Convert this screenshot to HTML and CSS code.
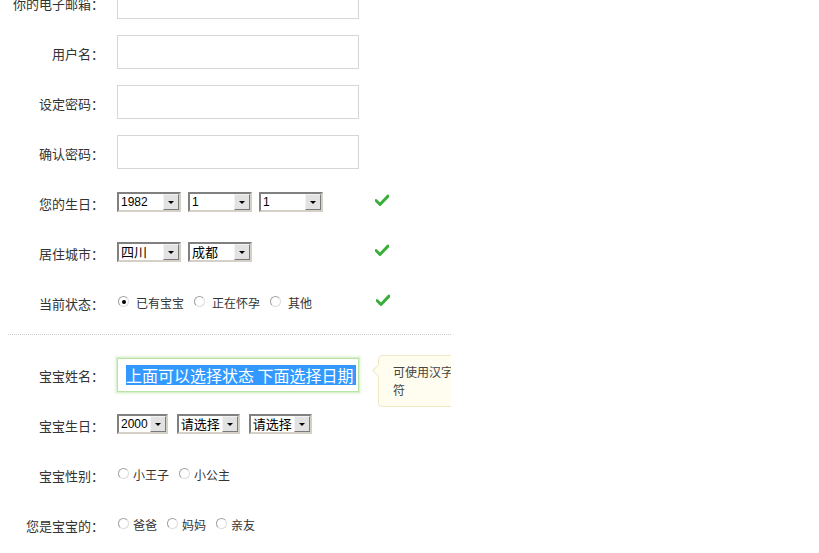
FILE: index.html
```html
<!DOCTYPE html>
<html lang="zh-CN">
<head>
<meta charset="utf-8">
<title>注册</title>
<link rel="stylesheet" href="styles.css">
</head>
<body>
<div class="page">
  <div class="row">
    <div class="label">你的电子邮箱：</div>
    <div class="field"><div class="text-input"></div></div>
  </div>
  <div class="row">
    <div class="label">用户名：</div>
    <div class="field"><div class="text-input"></div></div>
  </div>
  <div class="row">
    <div class="label">设定密码：</div>
    <div class="field"><div class="text-input"></div></div>
  </div>
  <div class="row">
    <div class="label">确认密码：</div>
    <div class="field"><div class="text-input"></div></div>
  </div>
  <div class="row">
    <div class="label">您的生日：</div>
    <div class="field wide">
      <div class="select w64"><span class="sel-text">1982</span><span class="sel-btn"></span></div>
      <div class="select w64"><span class="sel-text">1</span><span class="sel-btn"></span></div>
      <div class="select w64"><span class="sel-text">1</span><span class="sel-btn"></span></div>
    </div>
    <svg class="check" width="14" height="12" viewBox="0 0 14 12"><path d="M1 6.5 L5 10.5 L13 2" fill="none" stroke="#3aae3a" stroke-width="3" stroke-linecap="round" stroke-linejoin="round"/></svg>
  </div>
  <div class="row">
    <div class="label">居住城市：</div>
    <div class="field wide">
      <div class="select w64"><span class="sel-text cjk">四川</span><span class="sel-btn"></span></div>
      <div class="select w64"><span class="sel-text cjk">成都</span><span class="sel-btn"></span></div>
    </div>
    <svg class="check" width="14" height="12" viewBox="0 0 14 12"><path d="M1 6.5 L5 10.5 L13 2" fill="none" stroke="#3aae3a" stroke-width="3" stroke-linecap="round" stroke-linejoin="round"/></svg>
  </div>
  <div class="row">
    <div class="label">当前状态：</div>
    <div class="field wide radios status">
      <span class="radio checked"></span><span class="rtext">已有宝宝</span>
      <span class="radio"></span><span class="rtext">正在怀孕</span>
      <span class="radio"></span><span class="rtext">其他</span>
    </div>
    <svg class="check" width="14" height="12" viewBox="0 0 14 12"><path d="M1 6.5 L5 10.5 L13 2" fill="none" stroke="#3aae3a" stroke-width="3" stroke-linecap="round" stroke-linejoin="round"/></svg>
  </div>

  <div class="divider"></div>

  <div class="row">
    <div class="label">宝宝姓名：</div>
    <div class="field">
      <div class="text-input focus"><span class="selected">上面可以选择状态&nbsp;下面选择日期</span></div>
    </div>
    <div class="tip">可使用汉字、字母、数字，最多8个字<br>符</div>
  </div>
  <div class="row">
    <div class="label">宝宝生日：</div>
    <div class="field sel-gap">
      <div class="select"><span class="sel-text tight">2000</span><span class="sel-btn"></span></div>
      <div class="select"><span class="sel-text cjk tight">请选择</span><span class="sel-btn"></span></div>
      <div class="select"><span class="sel-text cjk tight">请选择</span><span class="sel-btn"></span></div>
    </div>
  </div>
  <div class="row">
    <div class="label">宝宝性别：</div>
    <div class="field radios small">
      <span class="radio"></span><span class="rtext">小王子</span>
      <span class="radio"></span><span class="rtext">小公主</span>
    </div>
  </div>
  <div class="row">
    <div class="label">您是宝宝的：</div>
    <div class="field radios small">
      <span class="radio"></span><span class="rtext">爸爸</span>
      <span class="radio"></span><span class="rtext">妈妈</span>
      <span class="radio"></span><span class="rtext">亲友</span>
    </div>
  </div>
</div>
</body>
</html>
```

FILE: styles.css
```css
html, body {
  margin: 0;
  padding: 0;
  background: #ffffff;
}

body {
  font-family: "Noto Sans CJK SC", "Liberation Sans", sans-serif;
  color: #333333;
  font-size: 13px;
}

.page {
  width: 443px;
  margin-left: 8px;
  margin-top: -23px;
  overflow: hidden;
}

.row {
  display: flex;
  align-items: center;
  height: 50px;
}

.label {
  width: 96px;
  flex-shrink: 0;
  text-align: right;
  font-size: 13px;
  line-height: 16px;
  white-space: nowrap;
  padding-top: 3px;
}

.field {
  margin-left: 13px;
  display: flex;
  align-items: center;
  flex-shrink: 0;
}

.field.wide {
  width: 258px;
  gap: 7px;
}

.field.sel-gap {
  gap: 9px;
}

.text-input {
  width: 240px;
  height: 32px;
  border: 1px solid #d6d6d6;
  background: #ffffff;
  box-sizing: content-box;
  display: flex;
  align-items: center;
}

.text-input.focus {
  border-color: #b9e3a8;
  box-shadow: 0 0 0 1px #d9f1cf, 0 0 2px 2px #e6f6de;
  margin-top: 1px;
}

.selected {
  margin-left: 8px;
  background: #3399ff;
  color: #ffffff;
  font-size: 16px;
  line-height: 20px;
  white-space: nowrap;
  padding-right: 2px;
}

.select {
  display: flex;
  align-items: center;
  height: 16px;
  border: 2px solid;
  border-color: #808080 #d4d0c8 #d4d0c8 #808080;
  background: #ffffff;
  box-sizing: content-box;
}

.select.w64 {
  width: 60px;
}

.sel-text {
  flex: 1;
  font-family: "Liberation Sans", "Noto Sans CJK SC", sans-serif;
  font-size: 12px;
  color: #000000;
  padding-left: 2px;
  line-height: 16px;
  white-space: nowrap;
}

.sel-text.cjk {
  font-family: "Noto Sans CJK SC", sans-serif;
  font-size: 13px;
}

.sel-text.tight {
  flex: none;
  padding-right: 2px;
}

.sel-btn {
  width: 14px;
  height: 14px;
  border: 1px solid;
  border-color: #f2f2f2 #7a7a7a #7a7a7a #f2f2f2;
  background: #e2e2e2;
  position: relative;
  flex-shrink: 0;
}

.sel-btn::after {
  content: "";
  position: absolute;
  left: 4px;
  top: 6px;
  border-left: 3px solid transparent;
  border-right: 3px solid transparent;
  border-top: 3px solid #000000;
}

.check {
  display: block;
  margin-top: -5px;
  flex-shrink: 0;
}

.field.radios {
  gap: 0;
  font-size: 12px;
  padding-left: 1px;
  padding-top: 1px;
}

.radio {
  display: inline-block;
  width: 9px;
  height: 9px;
  border-radius: 50%;
  border: 1px solid #a0a0a0;
  border-right-color: #dcdcdc;
  border-bottom-color: #dcdcdc;
  background: #ffffff;
  position: relative;
  flex-shrink: 0;
  margin-top: -2px;
}

.radio.checked::after {
  content: "";
  position: absolute;
  left: 2.5px;
  top: 2.5px;
  width: 4px;
  height: 4px;
  border-radius: 50%;
  background: #000000;
}

.status .radio {
  margin-right: 7px;
}

.status .rtext {
  margin-right: 10px;
}

.small .radio {
  margin-right: 4px;
}

.small .rtext {
  margin-right: 10px;
}

.rtext {
  line-height: 16px;
  white-space: nowrap;
}

.divider {
  height: 0;
  border-top: 1px dotted #cccccc;
  margin: 7px 0 14px 0;
}

.tip {
  align-self: flex-start;
  margin-top: 6px;
  margin-left: 19px;
  flex-shrink: 0;
  position: relative;
  background: #fffdf0;
  border: 1px solid #f0e8c4;
  border-radius: 4px;
  padding: 7px 12px 7px 14px;
  font-size: 12px;
  line-height: 18px;
  white-space: nowrap;
  color: #444444;
}

.tip::before {
  content: "";
  position: absolute;
  left: -5px;
  top: 10px;
  width: 8px;
  height: 8px;
  background: #fffdf0;
  border-left: 1px solid #f0e8c4;
  border-bottom: 1px solid #f0e8c4;
  transform: rotate(45deg);
}
```
